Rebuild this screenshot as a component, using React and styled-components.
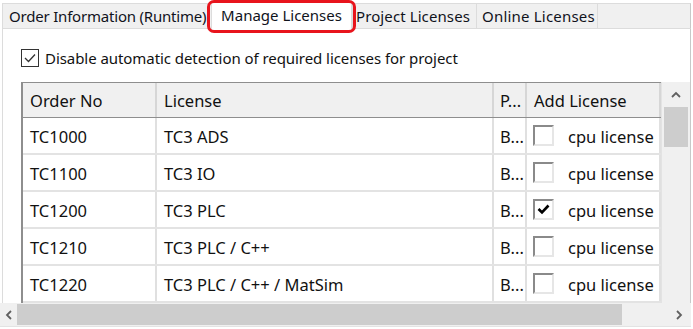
import React from "react";
import styled, { createGlobalStyle } from "styled-components";

const Global = createGlobalStyle`
  html, body { margin: 0; padding: 0; background: #ffffff; }
  body { font-family: "Noto Sans", "Open Sans", sans-serif; color: #111; }
`;

const Root = styled.div`
  position: relative;
  width: 693px;
  height: 329px;
  overflow: hidden;
  background: #ffffff;
  display: flex;
  flex-direction: column;
`;

const TabStrip = styled.div`
  margin-top: 3px;
  height: 25px;
  margin-left: 2px;
  margin-right: 2px;
  background: #f0f0f0;
  border-top: 1px solid #dcdcdc;
  border-right: 1px solid #c8c8c8;
  border-bottom: 1px solid #dcdcdc;
  display: flex;
  align-items: stretch;
  position: relative;
`;

const Tab = styled.div`
  position: relative;
  box-sizing: border-box;
  width: ${(p) => p.$w}px;
  flex: none;
  display: flex;
  align-items: center;
  justify-content: ${(p) => (p.$active ? "center" : "flex-start")};
  padding-left: ${(p) => p.$pl || 0}px;
  font-size: 15px;
  color: #10131c;
  letter-spacing: ${(p) => p.$ls || 0}px;
  white-space: nowrap;
  overflow: visible;
  border-left: 1px solid #dcdcdc;
  border-right: 1px solid #dcdcdc;
  margin-right: -1px;
  background: ${(p) => (p.$active ? "#ffffff" : "#f0f0f0")};
  ${(p) =>
    p.$active &&
    `
    margin-top: -3px;
    margin-bottom: -2px;
    margin-left: 4px;
    margin-right: 0px;
    padding-bottom: 2px;
    z-index: 1;
  `}
`;

const Highlight = styled.div`
  position: absolute;
  left: -5px;
  right: -5px;
  top: -1px;
  bottom: -3px;
  border: 3px solid #e8141c;
  border-radius: 7px;
  pointer-events: none;
`;

const Panel = styled.div`
  flex: 1;
  margin-left: 2px;
  margin-right: 2px;
  border-left: 1px solid #dcdcdc;
  border-right: 1px solid #c8c8c8;
  display: flex;
  flex-direction: column;
  padding-top: 20px;
`;

const CheckRow = styled.label`
  display: flex;
  align-items: center;
  gap: 6px;
  margin-left: 18px;
  font-size: 15px;
  letter-spacing: -0.06px;
  height: 18px;
`;

const FlatBox = styled.span`
  width: 16px;
  height: 16px;
  border: 1px solid #333;
  background: #fff;
  display: flex;
  align-items: center;
  justify-content: center;
`;

const GridArea = styled.div`
  margin-top: 15px;
  margin-left: 18px;
  display: flex;
  flex: 1;
  min-height: 0;
`;

const Grid = styled.div`
  width: 640px;
  border-left: 2px solid #8e8e8e;
  display: flex;
  flex-direction: column;
`;

const cols = "134px 337px 33px 1fr";

const HeaderRow = styled.div`
  display: grid;
  grid-template-columns: ${cols};
  height: 34px;
  background: #f0f0f0;
  border-top: 1px solid #8e8e8e;
  border-bottom: 1px solid #8e8e8e;
`;

const HeadCell = styled.div`
  display: flex;
  align-items: center;
  padding-left: ${(p) => p.$pl || 7}px;
  font-size: 16.5px;
  border-right: 2px solid #d6d6d6;
  white-space: nowrap;
  overflow: hidden;
`;

const Row = styled.div`
  display: grid;
  grid-template-columns: ${cols};
  height: 35px;
  border-bottom: 2px solid #e3e3e3;
  background: #fff;
`;

const Cell = styled.div`
  display: flex;
  align-items: center;
  padding-left: ${(p) => p.$pl || 7}px;
  padding-top: 2px;
  font-size: 16.5px;
  border-right: 2px solid #e0e0e0;
  white-space: nowrap;
  overflow: hidden;
  gap: 14px;
`;

const Box3D = styled.span`
  width: 17px;
  height: 17px;
  border-top: 2px solid #8a8a8a;
  border-left: 2px solid #8a8a8a;
  border-bottom: 2px solid #e6e6e6;
  border-right: 2px solid #e6e6e6;
  background: #fff;
  display: flex;
  align-items: center;
  justify-content: center;
  flex: none;
  margin-top: -2px;
`;

const VScroll = styled.div`
  width: 28px;
  background: #f0f0f0;
  border-left: 1px solid #e3e3e3;
  display: flex;
  flex-direction: column;
  align-items: center;
`;

const ArrowBtn = styled.div`
  height: ${(p) => p.$h || 25}px;
  width: ${(p) => p.$w || 25}px;
  display: flex;
  align-items: center;
  justify-content: center;
  flex: none;
`;

const VThumb = styled.div`
  width: 24px;
  height: 40px;
  background: #cdcdcd;
`;

const HScroll = styled.div`
  height: 23px;
  width: 691px;
  background: #f0f0f0;
  display: flex;
  align-items: center;
  border-bottom: 1px solid #e3e3e3;
  margin-bottom: 2px;
`;

const HThumb = styled.div`
  width: 605px;
  height: 21px;
  background: #cdcdcd;
`;

const HSpacer = styled.div`
  flex: 1;
`;

const Chevron = ({ dir }) => {
  const paths = {
    up: "M1 6 L5 2 L9 6",
    left: "M6 1 L2 5 L6 9",
    right: "M2 1 L6 5 L2 9",
  };
  const vertical = dir === "up";
  return (
    <svg width={vertical ? 10 : 8} height={vertical ? 8 : 10} viewBox={vertical ? "0 0 10 8" : "0 0 8 10"}>
      <path d={paths[dir]} fill="none" stroke="#606060" strokeWidth="1.8" />
    </svg>
  );
};

const rows = [
  { no: "TC1000", lic: "TC3 ADS", checked: false },
  { no: "TC1100", lic: "TC3 IO", checked: false },
  { no: "TC1200", lic: "TC3 PLC", checked: true },
  { no: "TC1210", lic: "TC3 PLC / C++", checked: false },
  { no: "TC1220", lic: "TC3 PLC / C++ / MatSim", checked: false },
];

export default function App() {
  return (
    <>
      <Global />
      <Root>
        <TabStrip>
          <Tab $w={206} $pl={6} $ls={-0.2}>Order Information (Runtime)</Tab>
          <Tab $active $w={141}>
            Manage Licenses
            <Highlight />
          </Tab>
          <Tab $w={125} $pl={3} $ls={0.1}>Project Licenses</Tab>
          <Tab $w={122} $pl={5} $ls={0.2}>Online Licenses</Tab>
        </TabStrip>
        <Panel>
          <CheckRow>
            <FlatBox>
              <svg width="12" height="10" viewBox="0 0 12 10">
                <path d="M1 5 L4.5 8.5 L11 1.5" fill="none" stroke="#333" strokeWidth="1.3" />
              </svg>
            </FlatBox>
            Disable automatic detection of required licenses for project
          </CheckRow>
          <GridArea>
            <Grid>
              <HeaderRow>
                <HeadCell>Order No</HeadCell>
                <HeadCell>License</HeadCell>
                <HeadCell $pl={6}>P...</HeadCell>
                <HeadCell>Add License</HeadCell>
              </HeaderRow>
              {rows.map((r) => (
                <Row key={r.no}>
                  <Cell>{r.no}</Cell>
                  <Cell>{r.lic}</Cell>
                  <Cell $pl={6}>B...</Cell>
                  <Cell $pl={6}>
                    <Box3D>
                      {r.checked && (
                        <svg width="13" height="11" viewBox="0 0 13 11">
                          <path d="M1.5 5 L5 8.5 L11.5 1.5" fill="none" stroke="#000" strokeWidth="2.6" />
                        </svg>
                      )}
                    </Box3D>
                    cpu license
                  </Cell>
                </Row>
              ))}
            </Grid>
            <VScroll>
              <ArrowBtn>
                <Chevron dir="up" />
              </ArrowBtn>
              <VThumb />
            </VScroll>
          </GridArea>
        </Panel>
        <HScroll>
          <ArrowBtn $w={17} $h={23}>
            <Chevron dir="left" />
          </ArrowBtn>
          <HThumb />
          <HSpacer />
          <ArrowBtn $w={25} $h={23}>
            <Chevron dir="right" />
          </ArrowBtn>
        </HScroll>
      </Root>
    </>
  );
}
